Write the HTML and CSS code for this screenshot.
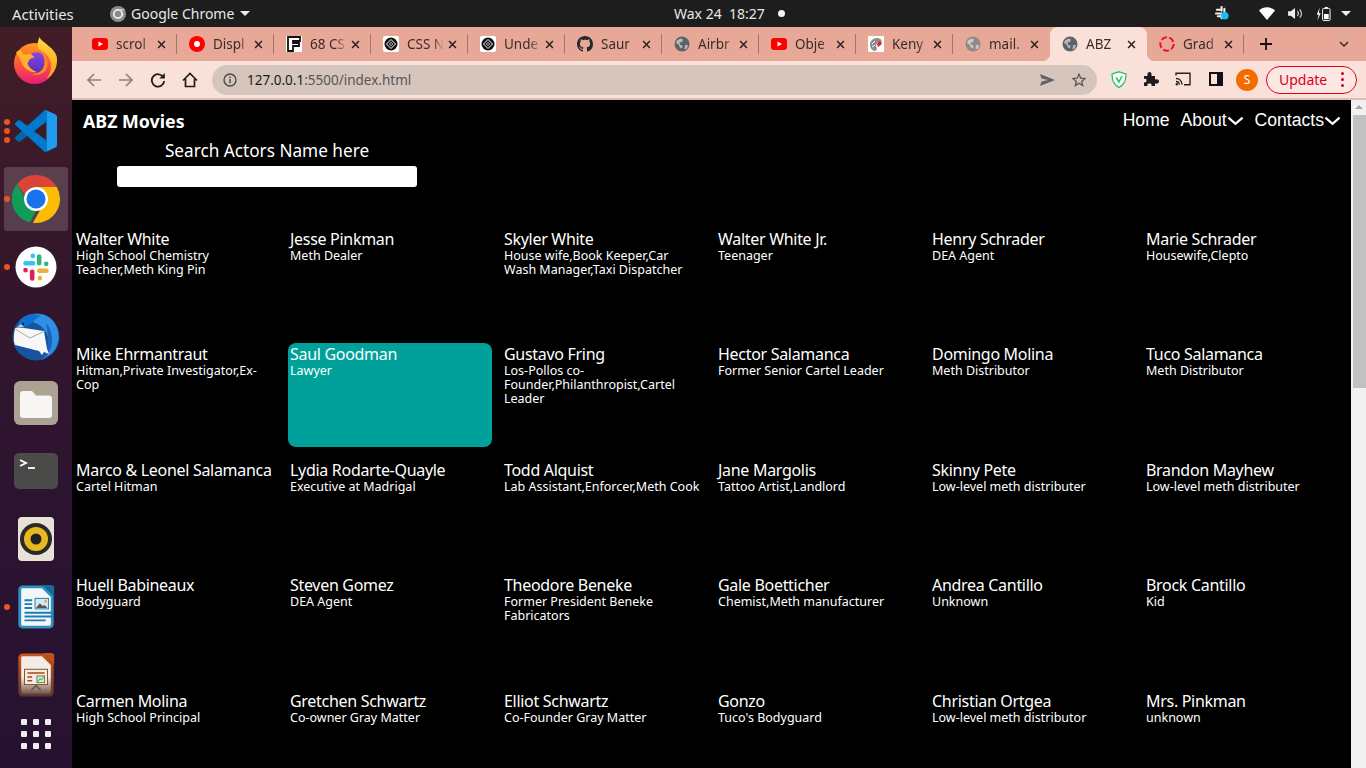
FILE: index.html
```html
<!DOCTYPE html>
<html lang="en">
<head>
    <meta charset="UTF-8">
    <meta name="viewport" content="width=device-width, initial-scale=1.0">
    <title>ABZ Movies</title>
    <link rel="stylesheet" href="styles.css">
</head>
<body>
    <svg class="defs" width="0" height="0">
        <symbol id="yt" viewBox="0 0 16 16"><rect y="2" width="16" height="12" rx="3" fill="#f00"/><path d="M6.500 5.500 11 8l-4.500 2.500z" fill="#fff"/></symbol>
        <symbol id="pen" viewBox="0 0 16 16"><rect width="16" height="16" rx="2" fill="#fff"/><circle cx="8" cy="8" r="6.500" fill="#111"/><path d="M8 3.500 12.500 8 8 12.500 3.500 8z" fill="none" stroke="#fff" stroke-width="1"/><path d="M8 6 10 8 8 10 6 8z" fill="#fff"/><circle cx="8" cy="8" r="1" fill="#111"/></symbol>
        <symbol id="globe" viewBox="0 0 16 16"><circle cx="8" cy="8" r="7.500" fill="currentColor"/><path d="M3 4.500 6.500 2.500 9 3.500 8 6 5.500 6.500 6 9 8.500 9.500 8 12.500 6 11.500 4.500 8.500 2 7zM11 9h3l-1 3.500-2.500 1z" fill="#fff" opacity=".55"/></symbol>
        <symbol id="x" viewBox="0 0 10 10"><path d="M1.200 1.200 8.800 8.800M8.800 1.200 1.200 8.800" stroke="currentColor" stroke-width="1.700" fill="none"/></symbol>
        <symbol id="chev" viewBox="0 0 18 10"><path d="M1.500 1.500 9 8l7.500-6.500" stroke="#fff" stroke-width="2.400" fill="none"/></symbol>
    </svg>

    <div class="topbar">
        <span class="top-activities">Activities</span>
        <div class="top-app">
            <svg class="top-chrome" viewBox="0 0 16 16"><circle cx="8" cy="8" r="8" fill="#8b8b8b"/><circle cx="8" cy="8" r="4.200" fill="none" stroke="#eee" stroke-width="1.800"/><path d="M8 3.800h6.500" stroke="#ddd" stroke-width="1"/></svg>
            <span>Google Chrome</span>
            <span class="caret"></span>
        </div>
        <div class="top-clock">
            <span>Wax 24&nbsp; 18:27</span>
            <span class="clock-dot"></span>
        </div>
        <div class="top-status">
            <svg class="st-slack" viewBox="0 0 16 16"><path d="M2 4h4M1 8h5M7 1v4M10 3v4M3 11h3M7 8v5" stroke="#eee" stroke-width="2.200" stroke-linecap="round" fill="none"/><circle cx="10.500" cy="10.500" r="4" fill="#12c2f2"/></svg>
            <svg class="st-wifi" viewBox="0 0 16 13"><path d="M0 3.500C4.500-.8 11.500-.8 16 3.500L8 13z" fill="#fff"/></svg>
            <svg class="st-vol" viewBox="0 0 16 14"><path d="M0 4.500h3L7.500 1v12L3 9.500H0z" fill="#eee"/><path d="M10 4.500c1.300 1.400 1.300 3.600 0 5M12.500 2.500c2.300 2.700 2.300 6.300 0 9" stroke="#ccc" stroke-width="1.300" fill="none"/></svg>
            <svg class="st-bat" viewBox="0 0 16 16"><path d="M4 1 .8 8.500h2L1.500 15 5 7H3z" fill="#fff"/><rect x="7" y="2" width="8" height="13" rx="1.300" fill="none" stroke="#fff" stroke-width="1"/><rect x="9.500" y=".5" width="3" height="1.500" fill="#fff"/><rect x="8.500" y="8" width="5" height="5.500" fill="#fff"/></svg>
            <span class="caret"></span>
        </div>
    </div>

    <div class="desktop">
        <div class="dock">
            <div class="dock-item ff">
                <svg class="dock-ic" viewBox="0 0 48 48">
                    <defs>
                        <linearGradient id="ffg" x1="0" y1="0" x2="0" y2="1"><stop offset="0" stop-color="#ff9a1e"/><stop offset=".5" stop-color="#ff5a36"/><stop offset="1" stop-color="#e6197d"/></linearGradient>
                        <linearGradient id="ffp" x1="0" y1="0" x2="0" y2="1"><stop offset="0" stop-color="#8a45e6"/><stop offset="1" stop-color="#5a2fb4"/></linearGradient>
                        <linearGradient id="ffy" x1="0" y1="0" x2="0" y2="1"><stop offset="0" stop-color="#ffd83a"/><stop offset="1" stop-color="#ff9a1e"/></linearGradient>
                    </defs>
                    <circle cx="24" cy="27" r="21" fill="url(#ffg)"/>
                    <path d="M29 0c-2 6-3 10 0 13 7 3 12 9 12 17 0 5-2 9-5 13 7-4 11-11 11-19 0-2 0-4-1-6-3-6-6-7-9-10-3-3-7-5-8-8z" fill="url(#ffy)"/>
                    <circle cx="26" cy="26" r="10.500" fill="url(#ffp)"/>
                    <path d="M30 15c7 4 9 12 6 18-3 5-10 7-15 5 7 0 12-4 13-10 1-5-1-10-4-13z" fill="#ff8a1e"/>
                    <path d="M5 16c4-4 9-3 12-2l3 3c3 2 4 4 4 4-4 0-6 3-7 6 1 4 5 7 10 9-7 1-15-4-17-12-1-3-3-6-5-8z" fill="#ffb12c"/>
                    <path d="M10 10c1 2 3 4 7 4l3 3-7 1c-2-2-3-5-3-8z" fill="#ff7a1c"/>
                </svg>
            </div>
            <div class="dock-item has-dots">
                <span class="dot"></span><span class="dot dot-up"></span><span class="dot dot-down"></span>
                <svg class="dock-ic ic-code" viewBox="0 0 100 100">
                    <path d="M71 99.300a6 6 0 0 0 4.900-.2l20.600-9.900a6.200 6.200 0 0 0 3.500-5.600V16.400a6.200 6.200 0 0 0-3.500-5.600L75.900.9A6.200 6.200 0 0 0 71 .7L75 27.300V72.700z" fill="#1f9cf0"/>
                    <path d="M75.900 99.100a6.200 6.200 0 0 1-7.100-1.200L29.400 62 12.200 75a4.200 4.200 0 0 1-5.300-.2l-5.500-5a4.200 4.200 0 0 1 0-6.200L68.800 2.100A6.200 6.200 0 0 1 75 1v26.300L37 56l38 16.700z" fill="#0065a9"/>
                    <path d="M75.900.9a6.200 6.200 0 0 0-7.100 1.200L29.400 38 12.200 25a4.200 4.200 0 0 0-5.300.2l-5.500 5a4.200 4.200 0 0 0 0 6.200L68.800 97.900a6.200 6.200 0 0 0 6.200 1.100V72.700L45.100 50 75 27.300z" fill="#007acc"/>
                </svg>
            </div>
            <div class="dock-item active">
                <span class="dot"></span>
                <svg class="dock-ic ic-chrome" viewBox="0 0 48 48">
                    <path d="M24 0a24 24 0 0 1 20.800 12H24a12 12 0 0 0-11.300 8L5 9A24 24 0 0 1 24 0z" fill="#db4437"/>
                    <path d="M5 9l8.300 14.400A12 12 0 0 0 24 36l-6 11.300A24 24 0 0 1 5 9z" fill="#0f9d58"/>
                    <path d="M44.800 12A24 24 0 0 1 21 47.800L31 30a12 12 0 0 0-7-18z" fill="#fbbc05"/>
                    <circle cx="24" cy="24" r="12" fill="#fff"/><circle cx="24" cy="24" r="9.500" fill="#1a73e8"/>
                </svg>
            </div>
            <div class="dock-item">
                <span class="dot"></span>
                <svg class="dock-ic ic-slack" viewBox="0 0 44 44">
                    <circle cx="22" cy="22" r="21.500" fill="#fff"/>
                    <path d="M11 18h8M18.700 10.300v.1" stroke="#36c5f0" stroke-width="4.800" stroke-linecap="round"/>
                    <path d="M25.300 11v7M32.700 18.600v.1" stroke="#2eb67d" stroke-width="4.800" stroke-linecap="round"/>
                    <path d="M25.500 26H33M26 33.600v.1" stroke="#ecb22e" stroke-width="4.800" stroke-linecap="round"/>
                    <path d="M18 27v7M11 25.300v.1" stroke="#e01e5a" stroke-width="4.800" stroke-linecap="round"/>
                </svg>
            </div>
            <div class="dock-item tb">
                <svg class="dock-ic" viewBox="0 0 48 48">
                    <circle cx="24" cy="24" r="23.500" fill="#17549f"/>
                    <path d="M10 6C18-1 34-2 42 9c7 10 6 24-3 32l-9 6c7-9 9-19 4-28C29 10 19 8 10 6z" fill="#2f8fe4"/>
                    <path d="M34 10c7 8 9 22 1 33l-5 4c6-9 8-20 4-37z" fill="#1a63b8"/>
                    <path d="M9 6c5-5 14-6 20-3-4 1-7 4-10 8l-8 4-6 1c0-4 2-7 4-10z" fill="#0f6fd0"/>
                    <path d="M3 15h9l20 3 3 18 2 5-5-2-2 3-3-4-24-6c-2-5-1-11 0-17z" fill="#f7f7f7"/>
                    <path d="M3 16l15 9 15-7" fill="none" stroke="#a9a9a9" stroke-width="1"/>
                    <path d="M4 15l5-4 3 3z" fill="#c9c9c9"/>
                    <circle cx="11" cy="11" r="1.200" fill="#222"/>
                </svg>
            </div>
            <div class="dock-item">
                <svg class="dock-ic" viewBox="0 0 44 44">
                    <rect width="44" height="44" rx="6" fill="#aba391"/>
                    <path d="M6 13a3 3 0 0 1 3-3h9l4 4.500h14a3 3 0 0 1 2 2.500v17a3 3 0 0 1-3 3H9a3 3 0 0 1-3-3z" fill="#f7f6f4"/>
                </svg>
            </div>
            <div class="dock-item">
                <svg class="dock-ic" viewBox="0 0 44 44">
                    <rect width="44" height="36" y="4" rx="5" fill="#4a4a48"/>
                    <path d="M6 11l6 3-6 3" fill="none" stroke="#fff" stroke-width="1.800"/>
                    <path d="M14 19h7" stroke="#fff" stroke-width="1.800"/>
                </svg>
            </div>
            <div class="dock-item">
                <svg class="dock-ic" viewBox="0 0 44 44">
                    <rect x="4" width="36" height="44" rx="4" fill="#e6e2d8"/>
                    <circle cx="22" cy="22" r="16" fill="#2c2a28"/>
                    <circle cx="22" cy="22" r="12" fill="#e7b820"/>
                    <circle cx="22" cy="22" r="5.500" fill="#222"/>
                </svg>
            </div>
            <div class="dock-item">
                <span class="dot"></span>
                <svg class="dock-ic" viewBox="0 0 38 46">
                    <path d="M5 2h21l10 10v29a3 3 0 0 1-3 3H5a3 3 0 0 1-3-3V5a3 3 0 0 1 3-3z" fill="#f4f7f8" stroke="#2f8fc0" stroke-width="3"/>
                    <path d="M26 0h9a3 3 0 0 1 3 3v9z" fill="#156b9a"/>
                    <path d="M7 16h8M7 20h8M7 24h8M7 29h29M7 33h29M7 37h22" stroke="#1a7fb5" stroke-width="2"/>
                    <rect x="18" y="14" width="14" height="11" fill="#d7e8f2" stroke="#1a7fb5"/>
                    <path d="M19 24l4-5 3 3 2-1 3 3z" fill="#555"/>
                    <circle cx="29" cy="17" r="1.500" fill="#f2b01e"/>
                </svg>
            </div>
            <div class="dock-item">
                <svg class="dock-ic" viewBox="0 0 38 46">
                    <defs>
                        <linearGradient id="impf" x1="0" y1="0" x2="0" y2="1"><stop offset=".55" stop-color="#f3ece6"/><stop offset="1" stop-color="#6f4a3c"/></linearGradient>
                        <linearGradient id="imps" x1="0" y1="0" x2="0" y2="1"><stop offset="0" stop-color="#c9551a"/><stop offset="1" stop-color="#5a3a30"/></linearGradient>
                    </defs>
                    <path d="M5 2h21l10 10v29a3 3 0 0 1-3 3H5a3 3 0 0 1-3-3V5a3 3 0 0 1 3-3z" fill="url(#impf)" stroke="url(#imps)" stroke-width="3"/>
                    <path d="M26 0h9a3 3 0 0 1 3 3v9z" fill="#c2521a"/>
                    <rect x="7" y="17" width="24" height="16" fill="#f4ebe4" stroke="#8a4a2a"/>
                    <path d="M10 21h18M10 25h5M10 29h5" stroke="#a8491a" stroke-width="1.600"/>
                    <rect x="20" y="24" width="8" height="7" fill="#dfe6d8" stroke="#4a8a3a"/>
                    <path d="M21 30l2-3 2 1 2-3" fill="none" stroke="#3f9a3a" stroke-width="1"/>
                    <path d="M14 39l5-5 5 5" fill="none" stroke="#555" stroke-width="1.500"/>
                </svg>
            </div>
            <div class="dock-apps">
                <span></span><span></span><span></span>
                <span></span><span></span><span></span>
                <span></span><span></span><span></span>
            </div>
        </div>

        <div class="browser">
            <div class="tabstrip">
                <div class="tab"><svg class="fav"><use href="#yt"/></svg><span class="tab-title">scrol</span><svg class="tab-x"><use href="#x"/></svg></div>
                <div class="tab"><svg class="fav" viewBox="0 0 16 16"><circle cx="8" cy="8" r="8" fill="#f00"/><circle cx="8" cy="8" r="3" fill="#fff"/></svg><span class="tab-title">Displ</span><svg class="tab-x"><use href="#x"/></svg></div>
                <div class="tab"><svg class="fav" viewBox="0 0 16 16"><rect width="16" height="16" fill="#fff"/><path d="M2 1h12v4H7v2h6v3H7v5H2z" fill="none" stroke="#111" stroke-width="1.800"/></svg><span class="tab-title">68 CS</span><svg class="tab-x"><use href="#x"/></svg></div>
                <div class="tab"><svg class="fav"><use href="#pen"/></svg><span class="tab-title">CSS N</span><svg class="tab-x"><use href="#x"/></svg></div>
                <div class="tab"><svg class="fav"><use href="#pen"/></svg><span class="tab-title">Unde</span><svg class="tab-x"><use href="#x"/></svg></div>
                <div class="tab"><svg class="fav" viewBox="0 0 16 16"><path fill="#24292f" d="M8 0C3.580 0 0 3.580 0 8c0 3.540 2.290 6.530 5.470 7.590.4.070.55-.17.55-.38 0-.19-.01-.82-.01-1.490-2.010.37-2.530-.49-2.690-.94-.09-.23-.48-.94-.82-1.130-.28-.15-.68-.52-.01-.53.63-.01 1.080.58 1.230.82.72 1.210 1.870.87 2.330.66.070-.52.280-.87.510-1.070-1.780-.2-3.640-.89-3.640-3.950 0-.87.310-1.590.820-2.150-.08-.2-.36-1.020.08-2.120 0 0 .67-.21 2.200.82.640-.18 1.320-.27 2-.27s1.360.09 2 .27c1.530-1.040 2.200-.82 2.200-.82.44 1.100.16 1.920.08 2.120.51.560.82 1.270.82 2.150 0 3.070-1.870 3.750-3.650 3.950.29.25.54.73.54 1.480 0 1.070-.01 1.930-.01 2.200 0 .21.150.46.550.38A8.010 8.010 0 0 0 16 8c0-4.420-3.580-8-8-8z"/></svg><span class="tab-title">Saur</span><svg class="tab-x"><use href="#x"/></svg></div>
                <div class="tab"><svg class="fav globe-dark"><use href="#globe"/></svg><span class="tab-title">Airbr</span><svg class="tab-x"><use href="#x"/></svg></div>
                <div class="tab"><svg class="fav"><use href="#yt"/></svg><span class="tab-title">Obje</span><svg class="tab-x"><use href="#x"/></svg></div>
                <div class="tab"><svg class="fav" viewBox="0 0 16 16"><rect width="16" height="16" fill="#fff"/><path d="M2 9c0-4 3-7 7-7 2 0 4 1 5 3L10 6 8 9l1 5-3 1C4 14 2 12 2 9z" fill="#8a8a8a"/><path d="M11 5l3 1-1 3-3 2-1-3z" fill="#d8253a"/><path d="M4 8l3-3M4 11l3-2" stroke="#fff"/></svg><span class="tab-title">Keny</span><svg class="tab-x"><use href="#x"/></svg></div>
                <div class="tab"><svg class="fav globe-faded"><use href="#globe"/></svg><span class="tab-title">mail.</span><svg class="tab-x"><use href="#x"/></svg></div>
                <div class="tab tab-active"><svg class="fav globe-dark"><use href="#globe"/></svg><span class="tab-title">ABZ</span><svg class="tab-x"><use href="#x"/></svg></div>
                <div class="tab"><svg class="fav" viewBox="0 0 16 16"><circle cx="8" cy="8" r="6.700" fill="none" stroke="#e8102a" stroke-width="2" stroke-dasharray="6 2.400"/></svg><span class="tab-title">Grad</span><svg class="tab-x"><use href="#x"/></svg></div>
                <svg class="tab-new" viewBox="0 0 12 12"><path d="M6 0v12M0 6h12" stroke="#111" stroke-width="1.800"/></svg>
                <svg class="tab-list" viewBox="0 0 10 6"><path d="M1 1l4 4 4-4" stroke="#3a2e2a" stroke-width="1.500" fill="none"/></svg>
            </div>

            <div class="toolbar">
                <svg class="tool tool-dim" viewBox="0 0 16 16"><path d="M15 8H2M8 2 2 8l6 6" fill="none" stroke="currentColor" stroke-width="1.700"/></svg>
                <svg class="tool tool-dim" viewBox="0 0 16 16"><path d="M1 8h13M8 2l6 6-6 6" fill="none" stroke="currentColor" stroke-width="1.700"/></svg>
                <svg class="tool" viewBox="0 0 16 16"><path d="M13.500 5.500A6.200 6.200 0 1 0 14.200 9" fill="none" stroke="currentColor" stroke-width="1.800"/><path d="M14.800 1v5.500H9.300z" fill="currentColor"/></svg>
                <svg class="tool" viewBox="0 0 16 16"><path d="M1 8.500 8 1.500l7 7M3.500 7v7.500h9V7" fill="none" stroke="currentColor" stroke-width="1.700"/></svg>
                <div class="omnibox">
                    <svg class="omni-info" viewBox="0 0 14 14"><circle cx="7" cy="7" r="6" fill="none" stroke="#4a4542" stroke-width="1.300"/><path d="M7 6v4.200M7 3.500v1.500" stroke="#4a4542" stroke-width="1.400"/></svg>
                    <span class="omni-url"><b>127.0.0.1</b>:5500/index.html</span>
                    <svg class="omni-send" viewBox="0 0 15 12"><path d="M0 0 15 6 0 12l1.500-4.500L8 6 1.500 4.500z" fill="#5f6368"/></svg>
                    <svg class="omni-star" viewBox="0 0 14 14"><path d="M7 1.200 8.700 5.200l4.300.4-3.300 2.800 1 4.200L7 10.300 3.300 12.600l1-4.200L1 5.600l4.300-.4z" fill="none" stroke="#5f5551" stroke-width="1.300"/></svg>
                </div>
                <svg class="ext ext-shield" viewBox="0 0 16 17"><path d="M8 .8 15 3c0 6-1 10.500-7 13.500C2 13.500 1 9 1 3z" fill="#fff" stroke="#21c45a" stroke-width="1.300"/><path d="M5 6.500l3 4.500 3-6" fill="none" stroke="#21c45a" stroke-width="1.500"/></svg>
                <svg class="ext ext-puzzle" viewBox="0 0 16 16"><path d="M1 5h3.500C4 2.500 5 1 6.500 1S9 2.500 8.500 5H12v3.500c2.500-.5 4 .5 4 2s-1.500 2.500-4 2V15H8.500c.5-2-.5-2.500-2-2.500S4 13 4.500 15H1v-3.500c2-.5 2.500-.5 2.500-2S3 7.500 1 8z" fill="#1c1c1c"/></svg>
                <svg class="ext ext-cast" viewBox="0 0 16 14"><path d="M1 3.500V1.200h14v11.600H9" fill="none" stroke="#222" stroke-width="1.400"/><path d="M1 6.500c3.500 0 6 2.500 6 6.300M1 9.500c2 0 3.300 1.400 3.300 3.300" fill="none" stroke="#222" stroke-width="1.300"/><circle cx="1.800" cy="12.300" r="1.200" fill="#222"/></svg>
                <svg class="ext ext-panel" viewBox="0 0 14 14"><rect x="1" y="1" width="12" height="12" fill="none" stroke="#111" stroke-width="2"/><rect x="8" y="1" width="5" height="12" fill="#111"/></svg>
                <span class="avatar">S</span>
                <div class="update">
                    <span>Update</span>
                    <span class="update-dots"><i></i><i></i><i></i></span>
                </div>
            </div>

            <div class="viewport">
                <div class="page">
                    <nav class="navbar">
                        <span class="brand">ABZ Movies</span>
                        <div class="nav-links">
                            <a>Home</a>
                            <a>About<svg class="nav-chev"><use href="#chev"/></svg></a>
                            <a>Contacts<svg class="nav-chev"><use href="#chev"/></svg></a>
                        </div>
                    </nav>
                    <div class="search">
                        <label class="search-label">Search Actors Name here</label>
                        <input class="search-input" type="text">
                    </div>
                    <div class="actors">
                        <div class="actor"><div class="actor-name">Walter White</div><div class="actor-role">High School Chemistry Teacher,Meth King Pin</div></div>
                        <div class="actor"><div class="actor-name">Jesse Pinkman</div><div class="actor-role">Meth Dealer</div></div>
                        <div class="actor"><div class="actor-name">Skyler White</div><div class="actor-role">House wife,Book Keeper,Car Wash Manager,Taxi Dispatcher</div></div>
                        <div class="actor"><div class="actor-name">Walter White Jr.</div><div class="actor-role">Teenager</div></div>
                        <div class="actor"><div class="actor-name">Henry Schrader</div><div class="actor-role">DEA Agent</div></div>
                        <div class="actor"><div class="actor-name">Marie Schrader</div><div class="actor-role">Housewife,Clepto</div></div>

                        <div class="actor"><div class="actor-name">Mike Ehrmantraut</div><div class="actor-role">Hitman,Private Investigator,Ex-Cop</div></div>
                        <div class="actor hovered"><div class="actor-name">Saul Goodman</div><div class="actor-role">Lawyer</div></div>
                        <div class="actor"><div class="actor-name">Gustavo Fring</div><div class="actor-role">Los-Pollos co-Founder,Philanthropist,Cartel Leader</div></div>
                        <div class="actor"><div class="actor-name">Hector Salamanca</div><div class="actor-role">Former Senior Cartel Leader</div></div>
                        <div class="actor"><div class="actor-name">Domingo Molina</div><div class="actor-role">Meth Distributor</div></div>
                        <div class="actor"><div class="actor-name">Tuco Salamanca</div><div class="actor-role">Meth Distributor</div></div>

                        <div class="actor"><div class="actor-name">Marco &amp; Leonel Salamanca</div><div class="actor-role">Cartel Hitman</div></div>
                        <div class="actor"><div class="actor-name">Lydia Rodarte-Quayle</div><div class="actor-role">Executive at Madrigal</div></div>
                        <div class="actor"><div class="actor-name">Todd Alquist</div><div class="actor-role">Lab Assistant,Enforcer,Meth Cook</div></div>
                        <div class="actor"><div class="actor-name">Jane Margolis</div><div class="actor-role">Tattoo Artist,Landlord</div></div>
                        <div class="actor"><div class="actor-name">Skinny Pete</div><div class="actor-role">Low-level meth distributer</div></div>
                        <div class="actor"><div class="actor-name">Brandon Mayhew</div><div class="actor-role">Low-level meth distributer</div></div>

                        <div class="actor"><div class="actor-name">Huell Babineaux</div><div class="actor-role">Bodyguard</div></div>
                        <div class="actor"><div class="actor-name">Steven Gomez</div><div class="actor-role">DEA Agent</div></div>
                        <div class="actor"><div class="actor-name">Theodore Beneke</div><div class="actor-role">Former President Beneke Fabricators</div></div>
                        <div class="actor"><div class="actor-name">Gale Boetticher</div><div class="actor-role">Chemist,Meth manufacturer</div></div>
                        <div class="actor"><div class="actor-name">Andrea Cantillo</div><div class="actor-role">Unknown</div></div>
                        <div class="actor"><div class="actor-name">Brock Cantillo</div><div class="actor-role">Kid</div></div>

                        <div class="actor"><div class="actor-name">Carmen Molina</div><div class="actor-role">High School Principal</div></div>
                        <div class="actor"><div class="actor-name">Gretchen Schwartz</div><div class="actor-role">Co-owner Gray Matter</div></div>
                        <div class="actor"><div class="actor-name">Elliot Schwartz</div><div class="actor-role">Co-Founder Gray Matter</div></div>
                        <div class="actor"><div class="actor-name">Gonzo</div><div class="actor-role">Tuco's Bodyguard</div></div>
                        <div class="actor"><div class="actor-name">Christian Ortgea</div><div class="actor-role">Low-level meth distributor</div></div>
                        <div class="actor"><div class="actor-name">Mrs. Pinkman</div><div class="actor-role">unknown</div></div>
                    </div>
                </div>
                <div class="scrollbar">
                    <span class="scroll-up"></span>
                    <div class="scroll-thumb"></div>
                </div>
            </div>
        </div>
    </div>
</body>
</html>
```

FILE: styles.css
```css
* {
    box-sizing: border-box;
}

html, body {
    height: 768px;
    overflow: hidden;
}

body {
    margin: 0;
    display: flex;
    flex-direction: column;
    background-color: #000;
    font-family: "Noto Sans", sans-serif;
}

.defs {
    display: none;
}

/* gnome top bar */
.topbar {
    flex: 0 0 27px;
    display: flex;
    align-items: center;
    padding-left: 12px;
    background-color: #1d1d1d;
    color: #e8e8e6;
    font-size: 14px;
    position: relative;
}

.top-activities {
    width: 98px;
    font-size: 14.800px;
}

.top-app {
    display: flex;
    align-items: center;
}

.top-chrome {
    width: 16px;
    height: 16px;
    margin-right: 5px;
}

.caret {
    width: 0;
    height: 0;
    border-left: 5px solid transparent;
    border-right: 5px solid transparent;
    border-top: 5px solid #eee;
    margin-left: 6px;
}

.top-clock {
    position: absolute;
    left: 674px;
    top: 0;
    height: 27px;
    display: flex;
    align-items: center;
}

.clock-dot {
    width: 7px;
    height: 7px;
    border-radius: 50%;
    background-color: #f4f4f4;
    margin-left: 13px;
}

.top-status {
    position: absolute;
    right: 15px;
    top: 0;
    height: 27px;
    display: flex;
    align-items: center;
}

.st-slack {
    width: 15px;
    height: 15px;
    margin-right: 29.500px;
}

.st-wifi {
    width: 16px;
    height: 13px;
    margin-right: 12.500px;
}

.st-vol {
    width: 15px;
    height: 13px;
    margin-right: 13.500px;
}

.st-bat {
    width: 15px;
    height: 16px;
    margin-right: 10px;
}

.top-status .caret {
    margin-left: 0;
}

/* dock */
.desktop {
    flex: 1;
    display: flex;
    min-height: 0;
}

.dock {
    flex: 0 0 72px;
    display: flex;
    flex-direction: column;
    padding-top: 2px;
    background: linear-gradient(180deg, #421d26 0%, #33162c 35%, #2b1331 70%, #261230 100%);
}

.dock-item {
    flex: 0 0 68px;
    display: flex;
    align-items: center;
    justify-content: center;
    position: relative;
}

.dock-ic {
    width: 44px;
    height: 44px;
}

.ff .dock-ic {
    width: 47px;
    height: 47px;
    margin: 0 3px 6px 0;
}

.tb .dock-ic {
    width: 48px;
    height: 48px;
    margin-top: 4px;
}

.ic-code {
    width: 42px;
    height: 42px;
}

.ic-chrome {
    width: 48px;
    height: 48px;
}

.ic-slack {
    width: 42px;
    height: 42px;
}

.dock-item.active::before {
    content: "";
    position: absolute;
    left: 4px;
    right: 4px;
    top: 2px;
    bottom: 2px;
    border-radius: 3px;
    background-color: rgba(255, 255, 255, 0.17);
}

.dock-item .dock-ic {
    position: relative;
}

.dot {
    position: absolute;
    left: 4px;
    top: 31px;
    width: 6px;
    height: 6px;
    border-radius: 50%;
    background-color: #e95420;
}

.dot-up {
    top: 22px;
}

.dot-down {
    top: 40px;
}

.dock-apps {
    flex: 0 0 50px;
    display: grid;
    grid-template-columns: repeat(3, 6px);
    grid-auto-rows: 6px;
    gap: 6px;
    justify-content: center;
    align-content: center;
}

.dock-apps span {
    background-color: #eee;
    border-radius: 1px;
}

/* chrome */
.browser {
    flex: 1;
    display: flex;
    flex-direction: column;
    min-width: 0;
}

.tabstrip {
    flex: 0 0 34px;
    display: flex;
    align-items: center;
    padding-left: 8px;
    background-color: #e7a898;
    position: relative;
}

.tab {
    flex: 0 0 97px;
    height: 34px;
    display: flex;
    align-items: center;
    padding-left: 12px;
    position: relative;
    color: #3a2c28;
    font-size: 13.500px;
}

.tab::after {
    content: "";
    position: absolute;
    right: 0;
    top: 7px;
    height: 20px;
    width: 1px;
    background-color: #a57467;
}

.tab:nth-child(10)::after {
    display: none;
}

.tab-active {
    background-color: #f9e1d9;
    border-radius: 8px 8px 0 0;
}

.tab-active::before,
.tab-active::after {
    content: "";
    position: absolute;
    top: auto;
    bottom: 0;
    width: 8px;
    height: 8px;
}

.tab-active::before {
    left: -8px;
    background: radial-gradient(circle at 0 0, transparent 8px, #f9e1d9 8.500px);
}

.tab-active::after {
    right: -8px;
    background: radial-gradient(circle at 100% 0, transparent 8px, #f9e1d9 8.500px);
}

.fav {
    flex: 0 0 16px;
    width: 16px;
    height: 16px;
}

.globe-dark {
    color: #5f6368;
}

.globe-faded {
    color: #8f8a88;
}

.tab-title {
    width: 37px;
    margin-left: 8px;
    overflow: hidden;
    white-space: nowrap;
    -webkit-mask-image: linear-gradient(90deg, #000 70%, transparent 100%);
    mask-image: linear-gradient(90deg, #000 70%, transparent 100%);
}

.tab-x {
    width: 9px;
    height: 9px;
    margin-left: 4px;
    color: #2a2220;
}

.tab-new {
    width: 12px;
    height: 12px;
    margin-left: 16px;
}

.tab-list {
    width: 10px;
    height: 6px;
    margin-left: 67px;
}

.toolbar {
    flex: 0 0 39px;
    display: flex;
    align-items: flex-start;
    padding: 4px 0 0 14px;
    background-color: #f9e1d9;
    border-bottom: 2px solid #d9c1b8;
}

.tool {
    flex: 0 0 16px;
    width: 16px;
    height: 16px;
    margin: 7px 16px 0 0;
    color: #1c1c1c;
}

.tool-dim {
    color: #8c817c;
}

.omnibox {
    flex: 0 0 885px;
    height: 30px;
    margin-left: -2px;
    display: flex;
    align-items: center;
    padding: 0 11px 0 11px;
    background-color: #d6c5bd;
    border-radius: 15px;
    font-size: 13.500px;
    color: #5a5452;
}

.omni-info {
    width: 14px;
    height: 14px;
    margin-right: 10px;
}

.omni-url {
    flex: 1;
}

.omni-url b {
    font-weight: 400;
    color: #1e1b1a;
}

.omni-send {
    width: 15px;
    height: 12px;
    margin-right: 17px;
}

.omni-star {
    width: 14px;
    height: 14px;
}

.ext {
    margin-top: 6px;
    height: 16px;
    width: 16px;
    flex: 0 0 16px;
}

.ext-shield {
    margin-left: 14px;
    width: 16px;
    height: 17px;
}

.ext-puzzle {
    margin-left: 16px;
}

.ext-cast {
    margin-left: 16px;
}

.ext-panel {
    margin-left: 18px;
    width: 14px;
    flex-basis: 14px;
}

.avatar {
    flex: 0 0 22px;
    height: 22px;
    margin: 4px 0 0 13px;
    border-radius: 50%;
    background-color: #f26c00;
    color: #fff;
    font-size: 12px;
    line-height: 22px;
    text-align: center;
}

.update {
    flex: 0 0 91px;
    height: 28px;
    margin: 1px 0 0 8px;
    display: flex;
    align-items: center;
    justify-content: space-between;
    padding: 0 10px 1px 12px;
    border: 1px solid #e2001b;
    border-radius: 14px;
    background-color: #fde7e4;
    color: #d9001b;
    font-size: 14px;
}

.update-dots {
    display: flex;
    flex-direction: column;
    gap: 3px;
    margin-right: 2px;
}

.update-dots i {
    width: 3px;
    height: 3px;
    border-radius: 50%;
    background-color: #d9001b;
}

/* the page itself */
.viewport {
    flex: 1;
    display: flex;
    min-height: 0;
}

.page {
    flex: 1;
    min-width: 0;
    overflow: hidden;
    background-color: #000;
    color: #fff;
}

.navbar {
    height: 40px;
    display: flex;
    justify-content: space-between;
    padding: 10px 10px 0 11px;
}

.brand {
    font-size: 17.800px;
    font-weight: 700;
    line-height: 22px;
}

.nav-links {
    display: flex;
    gap: 11px;
    margin-top: -1px;
    font-family: "Liberation Sans", Arial, sans-serif;
    font-size: 17.600px;
    line-height: 22px;
}

.nav-chev {
    width: 17px;
    height: 10px;
}

.search {
    width: 390px;
    display: flex;
    flex-direction: column;
    align-items: center;
    margin-bottom: 40.500px;
}

.search-label {
    font-size: 17.200px;
    line-height: 21px;
    margin-bottom: 5px;
}

.search-input {
    width: 300px;
    height: 21px;
    border: none;
    border-radius: 3px;
    background-color: #fff;
}

.actors {
    display: grid;
    grid-template-columns: repeat(6, 204px);
    grid-auto-rows: 104px;
    column-gap: 10px;
    row-gap: 11.500px;
    padding-left: 2px;
}

.actor {
    padding: 2px 4px 2px 2px;
    border-radius: 8px;
}

.actor.hovered {
    background-color: #00a19b;
}

.actor-name {
    font-size: 16px;
    letter-spacing: -0.300px;
    line-height: 18px;
    margin-bottom: 1px;
}

.actor-role {
    font-size: 12.500px;
    line-height: 14px;
}

.scrollbar {
    flex: 0 0 15px;
    position: relative;
    background-color: #f1f1f1;
}

.scroll-up {
    position: absolute;
    left: 4px;
    top: 5px;
    border-left: 4px solid transparent;
    border-right: 4px solid transparent;
    border-bottom: 4px solid #a3a3a3;
}

.scroll-thumb {
    position: absolute;
    left: 2px;
    right: 0;
    top: 15px;
    height: 273px;
    background-color: #c1c1c1;
}
```
